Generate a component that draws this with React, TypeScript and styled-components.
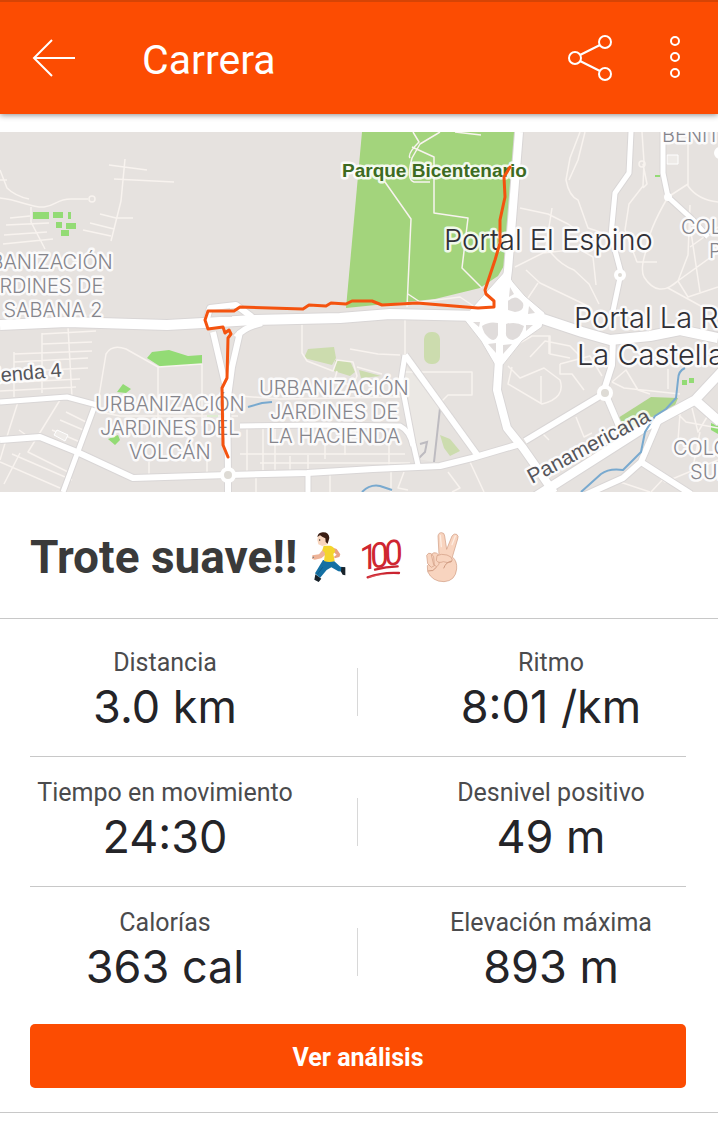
import React from 'react';
import styled, { createGlobalStyle } from 'styled-components';

const GlobalStyle = createGlobalStyle`
  * {
    box-sizing: border-box;
  }
  body {
    margin: 0;
    background-color: #fff;
    font-family: Roboto, sans-serif;
  }
`

const Header = styled.header`
  display: flex;
  align-items: center;
  height: 114px;
  padding: 0 31px 0 30px;
  border-top: 2px solid #d64405;
  background-color: #fc4c02;
  box-shadow: 0 1px 6px rgba(0, 0, 0, 0.45);
  color: #fff;
`

const IconButton = styled.button<{ $width?: number }>`
  width: ${({ $width }) => $width || 48}px;
  height: 48px;
  padding: 0;
  border: 0;
  background: none;
  color: inherit;
  cursor: pointer;
  svg {
    display: block;
    fill: none;
    stroke: currentColor;
    stroke-width: 2;
  }
`

const HeaderTitle = styled.h1`
  flex: 1;
  margin: 0 0 0 64px;
  padding-top: 4px;
  font-size: 41px;
  line-height: 48px;
  font-weight: 400;
`

const Actions = styled.div`
  display: flex;
  gap: 49px;
`

const MapWrapper = styled.section`
  margin-top: 18px;
  svg {
    display: block;
    width: 100%;
    height: auto;
  }
`

const MapLabel = styled.text<{ $size?: number; $color?: string; $weight?: number; $font?: string }>`
  font-family: ${({ $font }) => $font || 'Inter'}, sans-serif;
  font-size: ${({ $size }) => $size || 20}px;
  font-weight: ${({ $weight }) => $weight || 300};
  fill: ${({ $color }) => $color || '#85858c'};
  stroke: #fff;
  stroke-width: 5px;
  stroke-linejoin: round;
  stroke-opacity: 0.85;
  paint-order: stroke;
`

const ActivityTitle = styled.h2`
  display: flex;
  align-items: center;
  flex-wrap: wrap;
  gap: 6px;
  min-height: 127px;
  margin: 0;
  padding: 4px 30px 0;
  border-bottom: 1px solid #c8c8c8;
  color: #3a3a3a;
  font-size: 46px;
  line-height: 54px;
  font-weight: 700;
`

const Summary = styled.section`
  padding: 8px 32px 24px 30px;
  border-bottom: 1px solid #c8c8c8;
`

const StatRow = styled.div`
  display: flex;
  align-items: center;
  border-bottom: 1px solid #c8c8c8;
  &:last-of-type {
    border-bottom: 0;
  }
`

const Divider = styled.span`
  width: 1px;
  height: 48px;
  margin: 0 58px 0 57px;
  background-color: #d8d8d8;
`

const StatBox = styled.div`
  flex: 1 1 0;
  padding: 21px 0 20px;
  text-align: center;
  white-space: nowrap;
`

const StatLabel = styled.div`
  color: #4b4b4d;
  font-size: 25px;
  line-height: 30px;
`

const StatValue = styled.div`
  color: #242428;
  font-family: Inter, sans-serif;
  font-size: 45px;
  line-height: 58px;
`

const AnalysisButton = styled.button`
  display: block;
  width: 100%;
  height: 64px;
  margin-top: 8px;
  padding: 2px 0 0;
  border: 0;
  border-radius: 5px;
  background-color: #fc4c02;
  color: #fff;
  font-family: Roboto, sans-serif;
  font-size: 25px;
  font-weight: 700;
  cursor: pointer;
`

const stats = [
  [{ label: 'Distancia', value: '3.0 km' }, { label: 'Ritmo', value: '8:01 /km' }],
  [{ label: 'Tiempo en movimiento', value: '24:30' }, { label: 'Desnivel positivo', value: '49 m' }],
  [{ label: 'Calorías', value: '363 cal' }, { label: 'Elevación máxima', value: '893 m' }],
];

// thin residential streets
const streets = [
  'M0 38l7 18q8 8 22 11M0 48h7M0 66c20 2 32 10 44 9s12-8 27-8h17',
  'M125 27l-4 42-10 40M109 33l38 5M114 47l60 3M100 82l16 4h17M90 91l24 6M83 98l28 6',
  'M31 75v15l14 27M10 86l20-2M6 93l43-2M4 103l43-3M3 112l50-5',
  'M68 195l4 70M42 201v60M14 220v45M42 202l54-3M42 212l50-2M14 222l78-3M14 230l74-4M5 240l83-4M0 251l80-4M0 259l76-4',
  'M98 270l8-48q6-10 20-5l32 18v60M158 235l44-3v62M100 280l20 4h118M149 330v15M207 320v25',
  'M18 270l-9 28-9 30M60 268l-32 52 44 22M20 321L4 352M0 330l60 26M12 322l60 26M33 308l-14-10M66 280l24 12M60 288l28 12M52 298l28 12',
  'M302 188v33l5 8 26 10 4-11 16 2 4 14-4 9-19-3 3-11M350 217l28 5 22 1M357 235l25 7M405 185v40M405 240h67v23h-24l-8 8',
  'M240 264l40 3 120-2M247 295v46M263 295v46M275 295v46M308 323v17M325 295v32M345 295v28M389 310v30M240 322h165M260 331h150M290 324v16M256 346v14M330 342v18M391 338v22',
  'M580 0l-10 26-4 22q3 16 12 20l10 28 30 10M585 0l-7 28-9 20M642 0l2 30-1 24-14 18-4 26 12 32h20M643 32l4 20-4 4',
  'M520 76l28 6 20 10 12 8M552 76l-6 38q12 18 28 24l15 14 10 20M515 135l28-14 36-4 14 8 3 28M538 151l-12 18M526 138l14 13 50 24',
  'M668 65q-20 34-22 54-6 18-2 26 14 22 34 4l10-26 2-50M678 149l10 16 30-10M688 80l12 80M718 120l-50 36 40 22M668 65l20-13M688 0v54q10 14 30 16M718 95l-28 20',
  'M518 212l14-8h18v18l20 4M530 225l15-16 25 5 14 14M549 204v18M512 235l-4 17 34 20q24-6 18-24l-16-12-24 10-12-12M560 232l30-8 12 20M560 232v10h12l12 16M541 272v-28',
  'M612 250l14-12 12 20 12 4M612 250l12 6 56 6M668 237v20M576 285l8 20 8-4M541 300l8 8M404 340l-6 16 10 2M448 340l12 16-8 4M470 330l14 30',
  'M674 278l12 12 32 6M680 282l-2 26M692 276l6 24 12-20M641 330l24 20 53-22M700 300l-8 40M665 345l-14 15M620 350l30 10',
  'M413 0l6 10q-12 12-9 16M440 0l-20 12-8 14q-6 22 2 24h16M412 15l22 10v56l34 5-6 50 20 20M385 50l26 37-4 88M455 0l26 3M408 162l12 8 40-5 18 12',
];

const roads = [
  { width: 5, d: 'M0 270l67-5 30 8M94 276L63 360' },
  { width: 6, d: 'M0 308l40-3 37 15 56 26 95-3 79-2 66-4 67-3 32-8 48-14' },
  { width: 5, d: 'M240 294l83-1 77 1q10 5 13 20' },
  { width: 5, d: 'M405 223l-4 25 12 63 5 22M308 341v19' },
  { width: 6, d: 'M405 223l73 101' },
  { width: 5, d: 'M631 0l-2 41-14 20-4 42 10 38-8 38M663 0v41l5 24 24 22M692 87l16 18' },
  { width: 6, d: 'M613 205l-1 28-7 22M525 309l80-48 14 33' },
  { width: 8, d: 'M519 0l-11 138-6 47-3 43-2 30 10 38 16 20 14 20 17 25' },
  { width: 10, d: 'M0 193l67-3 100 3 36-2 50-3 87-2 50-4 90 2 60 2 42 14 28 8 40-4 30-6 38 8' },
  { width: 6, d: 'M213 200l7 30 7 30 1 82v18M240 200l-8 35-4 30M236 205q8-10 26-14M206 190l4-14 26-3 16 12' },
  { width: 9, d: 'M535 365l110-70 50-27 28-30M695 268l25 22' },
  { width: 6, d: 'M658 290l-17 40-18 16-40 18M641 330l50 32' },
];

const labels = [
  { text: 'URBANIZACIÓN', x: -37, y: 137 },
  { text: 'JARDINES DE', x: -25, y: 161 },
  { text: 'LA SABANA 2', x: -27, y: 185 },
  { text: 'URBANIZACIÓN', x: 95, y: 279 },
  { text: 'JARDINES DEL', x: 100, y: 303 },
  { text: 'VOLCÁN', x: 129, y: 327 },
  { text: 'URBANIZACIÓN', x: 259, y: 263 },
  { text: 'JARDINES DE', x: 270, y: 287 },
  { text: 'LA HACIENDA', x: 268, y: 311 },
  { text: 'BENITO', x: 662, y: 10 },
  { text: 'COLONIA', x: 681, y: 102 },
  { text: 'PORTAL', x: 709, y: 126 },
  { text: 'COLONIA', x: 673, y: 323 },
  { text: 'SUIZA', x: 690, y: 347 },
];

function ActivityMap() {
  return (
    <svg viewBox="0 0 718 360" role="img" aria-label="Mapa del recorrido">
      <rect width="718" height="360" fill="#e6e2df" />
      <path d="M362 0h156l-13 132-7 12-18 12-45 11-89 9z" fill="#a3d47c" />
      <g fill="#93db75">
        <path d="M33 80h16v7H33zM53 80h10v6H53zM68 80h3v7h-3zM56 90h6v6h-6zM66 91h10v6H66zM61 98h8v6h-8z" />
        <path d="M147 226l5-6 17-2 19 6 14-1v9l-41 3z" />
        <path d="M117 260l6-8 8 5-5 4zM108 307l10-4 2 5-5 5zM207 283h11v2h-11zM682 248h5v5h-5zM689 246h5v5h-5zM711 291l7 3v8l-7-4zM655 43h5v2h-5z" />
      </g>
      <g fill="#ccdcae">
        <path d="M308 217l26-2 2 11-4 7-28-7zM335 228l15 1 5 11-5 4-16-5zM359 238l22 6-20 2z" />
        <rect x="424" y="200" width="16" height="32" rx="7" />
        <path d="M440 303l10 4 10 12-10 5-6-8z" />
      </g>
      <path d="M618 286l33-21 27 1-5 12-18 10-34 12z" fill="#afd58b" />
      <path d="M405 232l35 44-6 54-16-3-12-56z" fill="#ebe8e4" />
      <path d="M440 276l-6 54M420 312l7-2-2 10-7 7" fill="none" stroke="#bdbbc0" strokeWidth="2" />
      <g fill="none" stroke="#f8f3ef" strokeWidth="1.5" strokeLinejoin="round">
        {streets.map((d, i) => <path key={i} d={d} />)}
      </g>
      <circle cx="92" cy="67" r="3" fill="none" stroke="#f8f3ef" strokeWidth="1.5" />
      <circle cx="642" cy="32" r="3" fill="none" stroke="#f8f3ef" strokeWidth="1.5" />
      <path d="M667 23h11v9h-11zM57 298l11 5-3 6-11-6z" fill="#eeebe8" stroke="#fff" />
      <g fill="none" strokeLinejoin="round">
        {roads.map(({ width, d }, i) => <path key={i} d={d} stroke="#d9d6d6" strokeWidth={width + 2} />)}
        <path d="M506 138l7 12 12 14 20 17-3 14-20 14-19 24h-8l-14-24-18-23z" fill="#fff" stroke="#d9d6d6" />
        {roads.map(({ width, d }, i) => <path key={i} d={d} stroke="#fff" strokeWidth={width} />)}
        {/* cloverleaf islands */}
        <g fill="#e0dcdb">
          <path d="M508 178v-9q8-8 15 2 2 8-8 9zM482 194q7-5 16-3v12q-3 8-9 3-6-5-7-12zM506 192q10-3 18 2-3 12-11 14-8-1-7-8z" />
          <path d="M510 155l4 7-5 3zM529 174l6 7-7 1zM473 190h7l-1 5zM526 193h7l-7 6zM488 212l8-1v10zM503 213l9-1-9 10z" />
          <path d="M214 178l16-2v2h-16zM214 184l18-1v2h-18z" />
        </g>
        <path d="M685 236q-7 3-7 12l-2 18-10 11-11 7-10 16-4 20-18 18q-14-2-22 4l-20 18M248 275l14-4 10-1M362 360q8-8 18-6l12 4" stroke="#78a9cf" strokeWidth="2" />
      </g>
      <g fill="#dedbd5" stroke="#fff" strokeWidth="4">
        <circle cx="605" cy="261" r="6" />
        <circle cx="228" cy="343" r="6" />
        <circle cx="620" cy="143" r="4" />
      </g>
      <circle cx="668" cy="65" r="4" fill="#fff" />
      <circle cx="720" cy="21" r="6" fill="#fff" />
      {labels.map(({ text, x, y }, i) => <MapLabel key={i} x={x} y={y}>{text}</MapLabel>)}
      <MapLabel x="342" y="45" $size={19} $weight={700} $font="Liberation Sans" $color="#3d6b22">Parque Bicentenario</MapLabel>
      <MapLabel x="444" y="118" $size={29} $color="#303036">Portal El Espino</MapLabel>
      <MapLabel x="574" y="196" $size={29} $color="#303036">Portal La Rioja</MapLabel>
      <MapLabel x="577" y="233" $size={29} $color="#303036">La Castellana</MapLabel>
      <MapLabel x="-39" y="250" $size={20} $font="Liberation Sans" $color="#55555a" transform="rotate(-5 0 248)">Hacienda 4</MapLabel>
      <MapLabel x="532" y="352" $size={21} $font="Liberation Sans" $color="#55555a" transform="rotate(-28 532 352)">Panamericana</MapLabel>
      <path
        d="M510 35l-6 10 1 20-5 23v23l-5 17-10 30 1 4 8 7v6l-16 1-61-5-35 2-10-4h-20l-6 3-15-1-5 3-17-1-6 4-63-2-6 4h-26l-3 9 3 9 15-2 2 6 4-3 2 4-3 4-1 40-5 10 1 57 5 12"
        fill="none"
        stroke="#f4530f"
        strokeWidth="3"
        strokeLinejoin="round"
        strokeLinecap="round"
      />
    </svg>
  )
}

function Runner() {
  return (
    <svg width="50" height="54" viewBox="39 26 150 162" role="img" aria-label="corredor">
      <path d="M99 116l34 4 18 16 14 2v14l-20-2-21-12-14 8-20 24-15-14z" fill="#1470a3" />
      <path d="M76 159l18 13-8 10-13-7zM154 137l12 1v24l-8-2-5-9z" fill="#18222a" />
      <path d="M100 83l-13 16-20 3-1 10 8 3 20-4 15-13z" fill="#eeb397" />
      <path d="M125 78l15 5 11 16-3 8-14 4-2-5 8-6-12-10z" fill="#e9a282" />
      <path d="M101 73h20q12 4 15 17l-6 8 4 21q-16 6-32 0l3-24-8-8z" fill="#f4d52c" />
      <path d="M84 44l-2 12 3 13 12 5 16-5 3-18-12-12z" fill="#f8d5bd" />
      <path d="M82 47q2-13 16-14 19-1 20 17l-5 17-6-5-1-11-8-4-8-5z" fill="#3a1d12" />
      <circle cx="89" cy="56" r="2" fill="#222" />
      <path d="M72 107l-4 2M82 159l16-21" stroke="#0a517b" strokeWidth="2" fill="none" />
    </svg>
  )
}

const HundredText = styled.text`
  font-family: Roboto, sans-serif;
  font-size: 104px;
  font-weight: 400;
  font-style: italic;
  fill: #cf2630;
`

function Hundred() {
  return (
    <svg width="50" height="54" viewBox="209 26 150 162" role="img" aria-label="cien puntos">
      <HundredText x="213 246 288" y="145" transform="rotate(-10 230 130)">100</HundredText>
      <path d="M257 145q32-9 68-10M235 168q44-16 94-13" fill="none" stroke="#ca2430" strokeWidth="7" strokeLinecap="round" />
      <path d="M237 168q26-7 45-9" fill="none" stroke="#e96b6d" strokeWidth="2" />
    </svg>
  )
}

function Victory() {
  return (
    <svg width="50" height="54" viewBox="377 26 150 162" role="img" aria-label="victoria">
      <g fill="#f8d4bf" stroke="#cf9a80" strokeWidth="2" strokeLinejoin="round">
        <path d="M449 100l-3-56q2-11 11-10 8 0 9 10l6 40 16-40q6-9 14-5 7 5 3 14l-16 54q15 12 13 36-4 36-38 38-35 0-49-30l-1-18z" />
        <path d="M412 102q5-10 14-5l7 9 2 27-9 5-11-11zM426 101q5-10 15-6 9 4 9 14l-1 20-7 7-9-6z" />
        <path d="M443 103q12-7 30-2 16 5 16 15-2 9-13 8l-14-3q-15 6-21-4z" />
      </g>
      <path d="M488 119q-18 2-25 22M416 149q16 3 26-12" fill="none" stroke="#cf9a80" strokeWidth="3" />
      <path d="M453 42l3 34M498 44l-10 26" stroke="#fdece1" strokeWidth="4" strokeLinecap="round" />
    </svg>
  )
}

export default function App() {
  return (
    <>
      <GlobalStyle />
      <Header>
        <IconButton aria-label="Atrás">
          <svg width="48" height="48" viewBox="0 0 48 48">
            <path d="M45 24H4M22 6L4 24l18 18" />
          </svg>
        </IconButton>
        <HeaderTitle>Carrera</HeaderTitle>
        <Actions>
          <IconButton aria-label="Compartir">
            <svg width="48" height="48" viewBox="0 0 48 48">
              <circle cx="9" cy="24" r="6" />
              <circle cx="39" cy="8" r="6" />
              <circle cx="39" cy="40" r="6" />
              <path d="M14 21l20-10M14 27l20 10" />
            </svg>
          </IconButton>
          <IconButton aria-label="Más opciones" $width={24}>
            <svg width="24" height="48" viewBox="0 0 24 48">
              <circle cx="12" cy="7" r="4" />
              <circle cx="12" cy="23" r="4" />
              <circle cx="12" cy="39" r="4" />
            </svg>
          </IconButton>
        </Actions>
      </Header>
      <main>
        <MapWrapper>
          <ActivityMap />
        </MapWrapper>
        <ActivityTitle>
          Trote suave!!
          <Runner />
          <Hundred />
          <Victory />
        </ActivityTitle>
        <Summary>
          {stats.map(([left, right]) => (
            <StatRow key={left.label}>
              <StatBox>
                <StatLabel>{left.label}</StatLabel>
                <StatValue>{left.value}</StatValue>
              </StatBox>
              <Divider />
              <StatBox>
                <StatLabel>{right.label}</StatLabel>
                <StatValue>{right.value}</StatValue>
              </StatBox>
            </StatRow>
          ))}
          <AnalysisButton>Ver análisis</AnalysisButton>
        </Summary>
      </main>
    </>
  )
}
